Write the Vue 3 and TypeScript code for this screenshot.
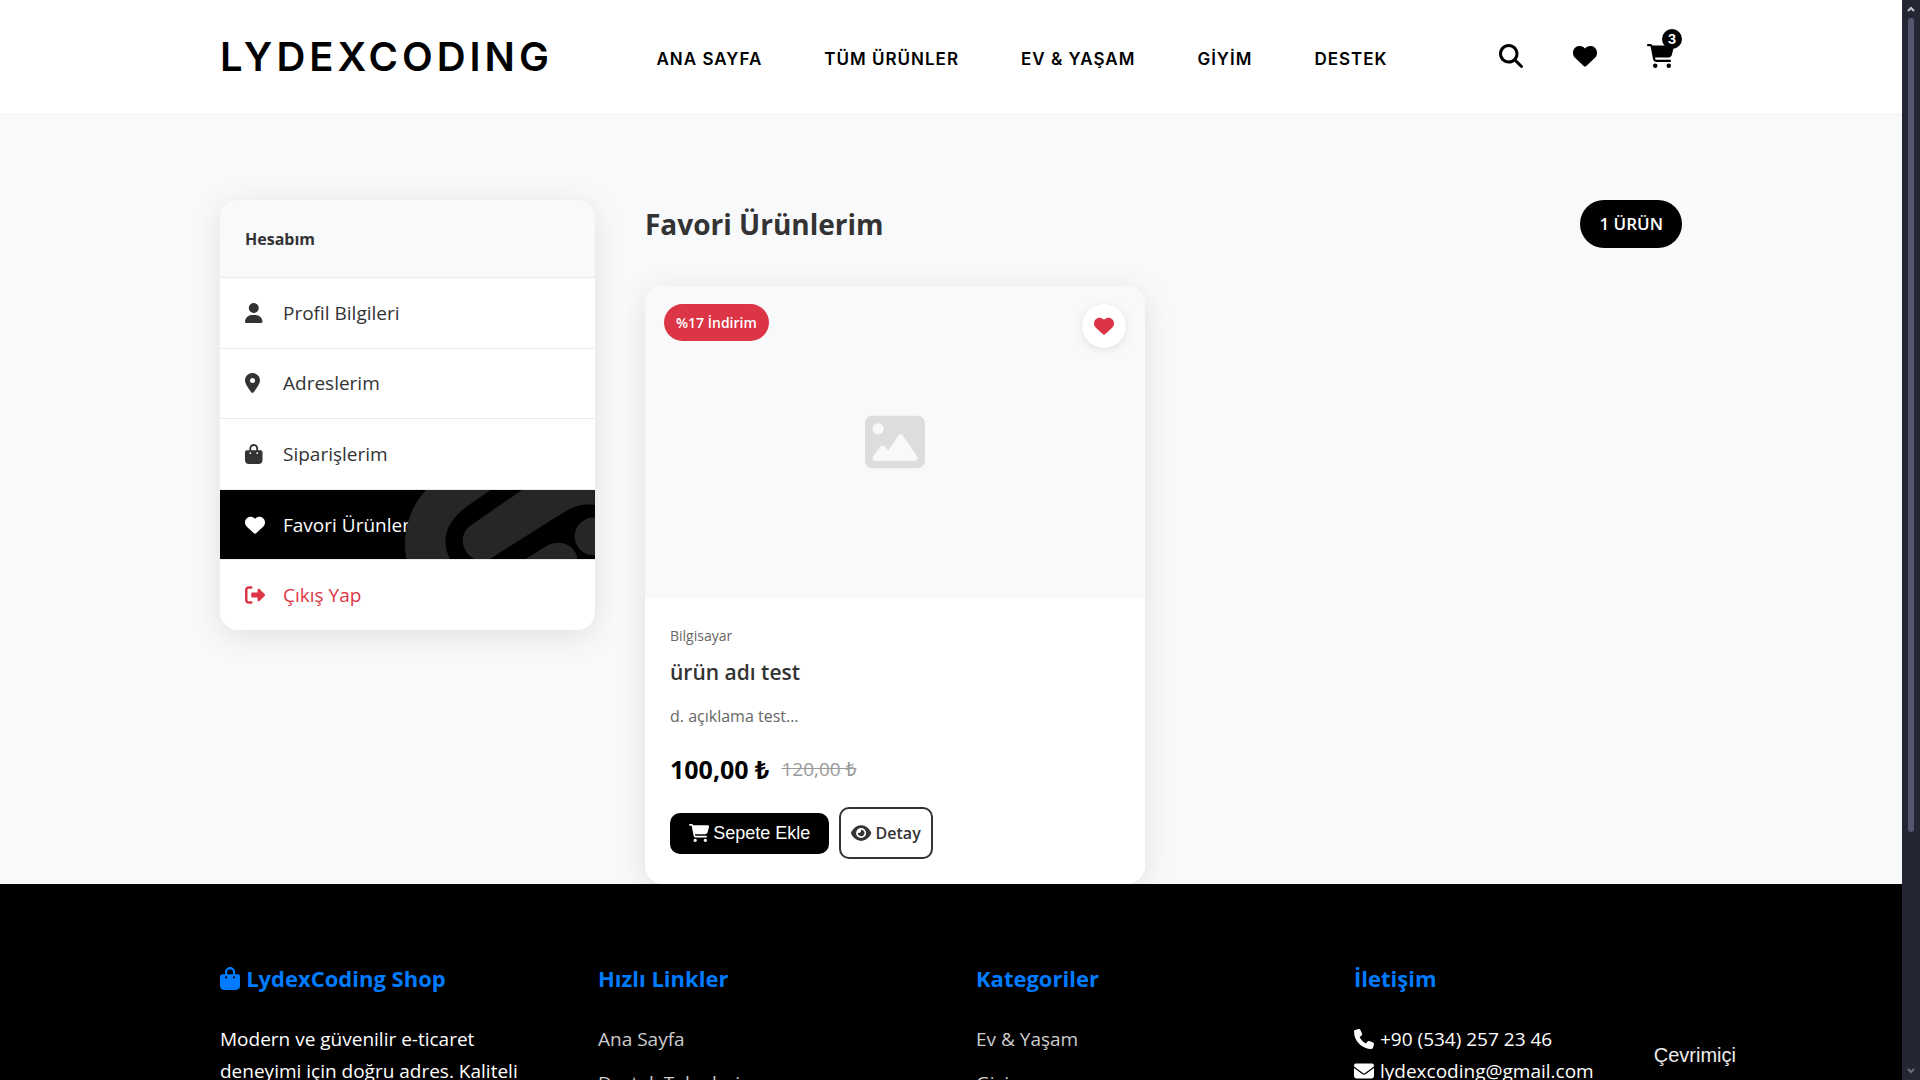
<script setup lang="ts">
interface Icon {
  width: number
  path: string
}

interface MenuItem {
  label: string
  icon: string
  state?: 'active' | 'danger'
}

const icons: Record<string, Icon> = {
  search: { width: 512, path: 'M416 208c0 45.9-14.9 88.3-40 122.7L502.6 457.4c12.5 12.5 12.5 32.8 0 45.3s-32.8 12.5-45.3 0L330.7 376c-34.4 25.2-76.8 40-122.7 40C93.1 416 0 322.9 0 208S93.1 0 208 0S416 93.1 416 208zM208 352a144 144 0 1 0 0-288 144 144 0 1 0 0 288z' },
  heart: { width: 512, path: 'M47.6 300.4L228.3 469.1c7.5 7 17.4 10.9 27.7 10.9s20.2-3.9 27.7-10.9L464.4 300.4c30.4-28.3 47.6-68 47.6-109.5v-5.8c0-69.9-50.5-129.5-119.4-141C347 36.5 300.6 51.4 268 84L256 96 244 84c-32.6-32.6-79-47.5-124.6-39.9C50.5 55.6 0 115.2 0 185.1v5.8c0 41.5 17.2 81.2 47.6 109.5z' },
  cart: { width: 576, path: 'M0 24C0 10.7 10.7 0 24 0H69.5c22 0 41.5 12.8 50.6 32h411c26.3 0 45.5 25 38.6 50.4l-41 152.3c-8.5 31.4-37 53.3-69.5 53.3H170.7l5.4 28.5c2.2 11.3 12.1 19.5 23.6 19.5H488c13.3 0 24 10.7 24 24s-10.7 24-24 24H199.7c-34.6 0-64.3-24.6-70.7-58.5L77.4 54.5c-.7-3.8-4-6.5-7.9-6.5H24C10.7 48 0 37.3 0 24zM128 464a48 48 0 1 1 96 0 48 48 0 1 1 -96 0zm336-48a48 48 0 1 1 0 96 48 48 0 1 1 0-96z' },
  user: { width: 448, path: 'M224 256A128 128 0 1 0 224 0a128 128 0 1 0 0 256zm-45.7 48C79.8 304 0 383.8 0 482.3C0 498.7 13.3 512 29.7 512H418.3c16.4 0 29.7-13.3 29.7-29.7C448 383.8 368.2 304 269.7 304H178.3z' },
  pin: { width: 384, path: 'M215.7 499.2C267 435 384 279.4 384 192C384 86 298 0 192 0S0 86 0 192c0 87.4 117 243 168.3 307.2c12.3 15.3 35.1 15.3 47.4 0zM192 128a64 64 0 1 1 0 128 64 64 0 1 1 0-128z' },
  bag: { width: 448, path: 'M160 112c0-35.3 28.7-64 64-64s64 28.7 64 64v48H160V112zm-48 48H48c-26.5 0-48 21.5-48 48V416c0 53 43 96 96 96H352c53 0 96-43 96-96V208c0-26.5-21.5-48-48-48H336V112C336 50.1 285.9 0 224 0S112 50.1 112 112v48zm24 48a24 24 0 1 1 0 48 24 24 0 1 1 0-48zm152 24a24 24 0 1 1 48 0 24 24 0 1 1 -48 0z' },
  logout: { width: 512, path: 'M377.9 105.9L500.7 228.7c7.2 7.2 11.3 17.1 11.3 27.3s-4.1 20.1-11.3 27.3L377.9 406.1c-6.4 6.4-15 9.9-24 9.9c-18.7 0-33.9-15.2-33.9-33.9l0-62.1-128 0c-17.7 0-32-14.3-32-32l0-64c0-17.7 14.3-32 32-32l128 0 0-62.1c0-18.7 15.2-33.9 33.9-33.9c9 0 17.6 3.6 24 9.9zM160 96L96 96c-17.7 0-32 14.3-32 32l0 256c0 17.7 14.3 32 32 32l64 0c17.7 0 32 14.3 32 32s-14.3 32-32 32l-64 0c-53 0-96-43-96-96L0 128C0 75 43 32 96 32l64 0c17.7 0 32 14.3 32 32s-14.3 32-32 32z' },
  image: { width: 512, path: 'M0 96C0 60.7 28.7 32 64 32H448c35.3 0 64 28.7 64 64V416c0 35.3-28.7 64-64 64H64c-35.3 0-64-28.7-64-64V96zM323.8 202.5c-4.5-6.6-11.9-10.5-19.8-10.5s-15.4 3.9-19.8 10.5l-87 127.6L170.7 297c-4.6-5.7-11.5-9-18.7-9s-14.2 3.3-18.7 9l-64 80c-5.8 7.2-6.9 17.1-2.9 25.4s12.4 13.6 21.6 13.6h96 32H424c8.9 0 17.1-4.9 21.2-12.8s3.6-17.4-1.4-24.7l-120-176zM112 192a48 48 0 1 0 0-96 48 48 0 1 0 0 96z' },
  eye: { width: 576, path: 'M288 32c-80.8 0-145.5 36.8-192.6 80.6C48.6 156 17.3 208 2.5 243.7c-3.3 7.9-3.3 16.7 0 24.6C17.3 304 48.6 356 95.4 399.4C142.5 443.2 207.2 480 288 480s145.5-36.8 192.6-80.6c46.8-43.5 78.1-95.4 93-131.1c3.3-7.9 3.3-16.7 0-24.6c-14.9-35.7-46.2-87.7-93-131.1C433.5 68.8 368.8 32 288 32zM144 256a144 144 0 1 1 288 0 144 144 0 1 1 -288 0zm144-64c0 35.3-28.7 64-64 64c-7.1 0-13.9-1.2-20.3-3.3c-5.5-1.8-11.9 1.6-11.7 7.4c.3 6.9 1.3 13.8 3.2 20.7c13.7 51.2 66.4 81.6 117.6 67.9s81.6-66.4 67.9-117.6c-11.1-41.5-47.8-69.4-88.6-71.1c-5.8-.2-9.2 6.1-7.4 11.7c2.1 6.4 3.3 13.2 3.3 20.3z' },
  phone: { width: 512, path: 'M164.9 24.6c-7.7-18.6-28-28.5-47.4-23.2l-88 24C12.1 30.2 0 46 0 64C0 311.4 200.6 512 448 512c18 0 33.8-12.1 38.6-29.5l24-88c5.3-19.4-4.6-39.7-23.2-47.4l-96-40c-16.3-6.8-35.2-2.1-46.3 11.6L304.7 368C234.3 334.7 177.3 277.7 144 207.3L193.3 167c13.7-11.2 18.4-30 11.6-46.3l-40-96z' },
  mail: { width: 512, path: 'M48 64C21.5 64 0 85.5 0 112c0 15.1 7.1 29.3 19.2 38.4L236.8 313.6c11.4 8.5 27 8.5 38.4 0L492.8 150.4c12.1-9.1 19.2-23.3 19.2-38.4c0-26.5-21.5-48-48-48H48zM0 176V384c0 35.3 28.7 64 64 64H448c35.3 0 64-28.7 64-64V176L294.4 339.2c-22.8 17.1-54 17.1-76.8 0L0 176z' },
}

const box = (name: string): string => `0 0 ${icons[name].width} 512`

const navLinks: string[] = ['ANA SAYFA', 'TÜM ÜRÜNLER', 'EV & YAŞAM', 'GİYİM', 'DESTEK']

const menu: MenuItem[] = [
  { label: 'Profil Bilgileri', icon: 'user' },
  { label: 'Adreslerim', icon: 'pin' },
  { label: 'Siparişlerim', icon: 'bag' },
  { label: 'Favori Ürünler', icon: 'heart', state: 'active' },
  { label: 'Çıkış Yap', icon: 'logout', state: 'danger' },
]

const linkColumns: { title: string; links: string[] }[] = [
  { title: 'Hızlı Linkler', links: ['Ana Sayfa', 'Destek Talepleri'] },
  { title: 'Kategoriler', links: ['Ev & Yaşam', 'Giyim'] },
]
</script>

<template>
  <div class="window">
    <div class="page">
      <header class="header">
        <div class="container header-row">
          <a class="logo" href="#">LYDEXCODING</a>
          <nav class="nav">
            <a v-for="link in navLinks" :key="link" href="#">{{ link }}</a>
          </nav>
          <div class="actions">
            <button type="button" aria-label="Ara">
              <svg class="icon" :viewBox="box('search')"><path :d="icons.search.path" /></svg>
            </button>
            <button type="button" aria-label="Favoriler">
              <svg class="icon" :viewBox="box('heart')"><path :d="icons.heart.path" /></svg>
            </button>
            <button type="button" aria-label="Sepet">
              <svg class="icon" :viewBox="box('cart')"><path :d="icons.cart.path" /></svg>
              <span class="count">3</span>
            </button>
          </div>
        </div>
      </header>

      <main class="container content">
        <aside class="sidebar">
          <h2 class="sidebar-title">Hesabım</h2>
          <a v-for="item in menu" :key="item.label" href="#" class="menu-item" :class="item.state">
            <span class="menu-icon">
              <svg class="icon" :viewBox="box(item.icon)"><path :d="icons[item.icon].path" /></svg>
            </span>
            <span>{{ item.label }}</span>
            <svg v-if="item.state === 'active'" class="emblem" viewBox="69 27 576 210">
              <path d="M135 27C95 70 72 130 72 190C72 210 74 225 78 237H208C175 165 205 115 265 72L330 27Z" />
              <path d="M425 27L270 134C235 158 238 215 285 237H325L550 95C590 72 610 68 645 72V27Z" />
              <path d="M433 237L495 198C535 172 590 192 592 237Z" />
              <circle cx="641" cy="167" r="57" />
            </svg>
          </a>
        </aside>

        <section class="favorites">
          <div class="favorites-head">
            <h1>Favori Ürünlerim</h1>
            <span class="total">1 ÜRÜN</span>
          </div>

          <article class="card">
            <div class="card-image">
              <svg class="icon placeholder" :viewBox="box('image')"><path :d="icons.image.path" /></svg>
              <span class="discount">%17 İndirim</span>
              <button type="button" class="favorite" aria-label="Favorilerden çıkar">
                <svg class="icon" :viewBox="box('heart')"><path :d="icons.heart.path" /></svg>
              </button>
            </div>
            <div class="card-body">
              <span class="category">Bilgisayar</span>
              <h3>ürün adı test</h3>
              <p class="description">d. açıklama test...</p>
              <div class="prices">
                <strong>100,00 ₺</strong>
                <s>120,00 ₺</s>
              </div>
              <div class="card-actions">
                <button type="button" class="add">
                  <svg class="icon" :viewBox="box('cart')"><path :d="icons.cart.path" /></svg>
                  Sepete Ekle
                </button>
                <a href="#" class="detail">
                  <svg class="icon" :viewBox="box('eye')"><path :d="icons.eye.path" /></svg>
                  Detay
                </a>
              </div>
            </div>
          </article>
        </section>
      </main>

      <footer class="footer">
        <div class="container footer-grid">
          <section>
            <h4>
              <svg class="icon" :viewBox="box('bag')"><path :d="icons.bag.path" /></svg>
              LydexCoding Shop
            </h4>
            <p>Modern ve güvenilir e-ticaret deneyimi için doğru adres. Kaliteli</p>
          </section>
          <section v-for="column in linkColumns" :key="column.title">
            <h4>{{ column.title }}</h4>
            <ul>
              <li v-for="link in column.links" :key="link"><a href="#">{{ link }}</a></li>
            </ul>
          </section>
          <section>
            <h4>İletişim</h4>
            <p class="contact">
              <svg class="icon" :viewBox="box('phone')"><path :d="icons.phone.path" /></svg>
              +90 (534) 257 23 46
            </p>
            <p class="contact">
              <svg class="icon" :viewBox="box('mail')"><path :d="icons.mail.path" /></svg>
              lydexcoding@gmail.com
            </p>
          </section>
        </div>
      </footer>

      <div class="status">Çevrimiçi</div>
    </div>

    <div class="scrollbar" aria-hidden="true">
      <svg viewBox="0 0 8 6"><path d="M1 5L4 2L7 5" stroke="#c4c4c8" /></svg>
      <div class="track"><div class="thumb"></div></div>
      <svg viewBox="0 0 8 6"><path d="M1 1L4 4L7 1" stroke="#6d6e76" /></svg>
    </div>
  </div>
</template>

<style>
body {
  margin: 0;
}
</style>

<style scoped>
* {
  box-sizing: border-box;
}

.window {
  display: flex;
  height: 100vh;
  overflow: hidden;
  font-family: "Open Sans", "Noto Sans", sans-serif;
  color: #333;
}

.page {
  position: relative;
  flex: 1;
  min-width: 0;
  overflow: hidden;
  background: #f8f9fb;
}

.container {
  width: calc(100% - 40px);
  max-width: 1462px;
  margin: 0 auto;
}

a {
  color: inherit;
  text-decoration: none;
}

button {
  border: 0;
  padding: 0;
  background: none;
  color: inherit;
}

h1,
h2,
h3,
h4,
p,
ul {
  margin: 0;
  padding: 0;
}

.icon {
  display: block;
  flex: none;
  height: 18px;
  fill: currentColor;
}

/* Header */
.header {
  background: #fff;
  border-bottom: 1px solid #eee;
  font-family: Inter, sans-serif;
  color: #000;
}

.header-row {
  display: flex;
  align-items: center;
  justify-content: space-between;
  height: 114px;
}

.logo {
  padding-bottom: 2px;
  font-size: 40px;
  font-weight: 600;
  letter-spacing: 4px;
}

.nav {
  display: flex;
  gap: 62px;
  padding-top: 4px;
  font-size: 17px;
  font-weight: 600;
  letter-spacing: 1px;
}

.actions {
  display: flex;
  gap: 34px;
  padding-bottom: 2px;
}

.actions button {
  position: relative;
  padding: 8px;
}

.actions .icon {
  height: 24px;
}

.count {
  position: absolute;
  top: -7px;
  right: 0;
  width: 20px;
  height: 20px;
  border-radius: 10px;
  background: #000;
  color: #fff;
  font: 700 13px/20px Inter, sans-serif;
  text-align: center;
}

/* Account area */
.content {
  display: grid;
  grid-template-columns: 375px minmax(0, 1fr);
  align-items: start;
  gap: 50px;
  padding-top: 85px;
}

.sidebar {
  display: flex;
  flex-direction: column;
  min-height: 430px;
  overflow: hidden;
  border-radius: 18px;
  background: #fff;
  box-shadow: 0 6px 30px rgba(0, 0, 0, 0.1);
}

.sidebar-title {
  height: 78px;
  padding: 0 25px;
  border-bottom: 1px solid #e9ebed;
  background: #f8f9fb;
  font-size: 16px;
  font-weight: 700;
  line-height: 78px;
}

.menu-item {
  position: relative;
  display: flex;
  flex: 1;
  align-items: center;
  padding: 0 25px;
  border-bottom: 1px solid #e9ebed;
  font-size: 19px;
}

.menu-item:last-child {
  border-bottom: 0;
}

.menu-icon {
  width: 38px;
}

.menu-icon .icon {
  height: 20px;
}

.active {
  background: #000;
  color: #fff;
}

.danger {
  color: #dc3545;
}

.emblem {
  position: absolute;
  top: 0;
  right: 0;
  height: 100%;
  fill: #262626;
}

/* Favourites */
.favorites-head {
  display: flex;
  align-items: center;
  justify-content: space-between;
  margin-bottom: 38px;
}

h1 {
  font-size: 28px;
  font-weight: 700;
}

.total {
  padding: 0 19px;
  border-radius: 24px;
  background: #000;
  color: #fff;
  font-size: 17px;
  font-weight: 600;
  line-height: 48px;
}

.card {
  width: 500px;
  max-width: 100%;
  overflow: hidden;
  border-radius: 18px;
  background: #fff;
  box-shadow: 0 6px 30px rgba(0, 0, 0, 0.1);
}

.card-image {
  position: relative;
  display: flex;
  align-items: center;
  justify-content: center;
  height: 312px;
  background: #f8f9fb;
}

.placeholder {
  height: 60px;
  fill: #ddd;
}

.discount {
  position: absolute;
  top: 18px;
  left: 19px;
  padding: 0 12px;
  border-radius: 19px;
  background: #dc3545;
  color: #fff;
  font-size: 14px;
  font-weight: 600;
  line-height: 37px;
}

.favorite {
  position: absolute;
  top: 18px;
  right: 19px;
  display: grid;
  place-items: center;
  width: 44px;
  height: 44px;
  border-radius: 50%;
  background: #fff;
  box-shadow: 0 2px 10px rgba(0, 0, 0, 0.1);
  color: #dc3545;
}

.favorite .icon {
  height: 20px;
}

.card-body {
  padding: 25px;
}

.category {
  display: block;
  color: #666;
  font-size: 14px;
  line-height: 26px;
}

h3 {
  margin-top: 8px;
  font-size: 21px;
  font-weight: 600;
  line-height: 30px;
}

.description {
  margin-top: 15px;
  color: #666;
  font-size: 16px;
  line-height: 28px;
}

.prices {
  display: flex;
  align-items: center;
  gap: 12px;
  margin-top: 20px;
  line-height: 38px;
}

.prices strong {
  color: #000;
  font-size: 25px;
  font-weight: 700;
}

.prices s {
  color: #999;
  font-size: 19px;
}

.card-actions {
  display: flex;
  align-items: center;
  gap: 10px;
  margin-top: 19px;
}

.add,
.detail {
  display: flex;
  align-items: center;
  gap: 4px;
  border-radius: 10px;
}

.add {
  height: 41px;
  padding: 0 19px;
  background: #000;
  color: #fff;
  font: 18px "Liberation Sans", Arial, sans-serif;
}

.detail {
  height: 52px;
  padding: 0 10px;
  border: 2px solid #333;
  font-size: 16px;
  font-weight: 600;
}

/* Footer */
.footer {
  min-height: 400px;
  padding-top: 77px;
  background: #000;
  color: #fff;
}

.footer-grid {
  display: grid;
  grid-template-columns: repeat(4, minmax(0, 1fr));
  gap: 50px;
  font-size: 19px;
  line-height: 32px;
}

h4 {
  display: flex;
  align-items: center;
  gap: 6px;
  margin-bottom: 28px;
  color: #007bff;
  font-size: 22px;
  font-weight: 700;
  line-height: 34px;
}

h4 .icon {
  height: 23px;
}

ul {
  list-style: none;
}

li {
  margin-bottom: 12px;
  color: #ccc;
}

.contact {
  display: flex;
  align-items: center;
  gap: 6px;
}

.contact .icon {
  height: 20px;
}

/* Sits over the lower right corner of the page */
.status {
  position: absolute;
  right: 166px;
  bottom: 13px;
  color: #ededed;
  font: 20px/24px "Liberation Sans", Arial, sans-serif;
}

.scrollbar {
  display: flex;
  flex-direction: column;
  align-items: center;
  gap: 6px;
  width: 18px;
  padding: 6px 0;
  background: #242733;
}

.scrollbar svg {
  width: 8px;
  height: 6px;
  fill: none;
  stroke-width: 2;
}

.track {
  flex: 1;
  width: 6px;
}

.thumb {
  height: 78%;
  border-radius: 3px;
  background: #54576f;
}
</style>
